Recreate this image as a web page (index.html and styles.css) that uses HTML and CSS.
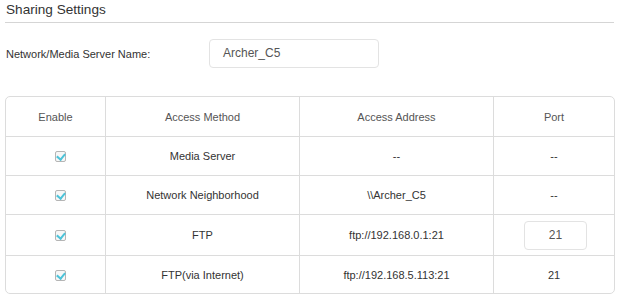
FILE: index.html
```html
<!DOCTYPE html>
<html lang="en">
<head>
    <meta charset="UTF-8">
    <title>Sharing Settings</title>
    <link rel="stylesheet" href="styles.css">
</head>
<body>
    <div class="panel">
        <h2 class="panel-title">Sharing Settings</h2>

        <div class="form-row">
            <label class="form-label">Network/Media Server Name:</label>
            <div class="text-input">Archer_C5</div>
        </div>

        <table class="share-table">
            <thead>
                <tr>
                    <th class="col-enable">Enable</th>
                    <th class="col-method">Access Method</th>
                    <th class="col-address">Access Address</th>
                    <th class="col-port">Port</th>
                </tr>
            </thead>
            <tbody>
                <tr>
                    <td><span class="check"></span></td>
                    <td>Media Server</td>
                    <td>--</td>
                    <td>--</td>
                </tr>
                <tr>
                    <td><span class="check"></span></td>
                    <td>Network Neighborhood</td>
                    <td>\\Archer_C5</td>
                    <td>--</td>
                </tr>
                <tr class="row-tall">
                    <td><span class="check"></span></td>
                    <td>FTP</td>
                    <td>ftp://192.168.0.1:21</td>
                    <td><div class="port-input">21</div></td>
                </tr>
                <tr>
                    <td><span class="check"></span></td>
                    <td>FTP(via Internet)</td>
                    <td>ftp://192.168.5.113:21</td>
                    <td>21</td>
                </tr>
            </tbody>
        </table>
    </div>
</body>
</html>
```

FILE: styles.css
```css
body {
    margin: 0;
    background: #fff;
    font-family: "Liberation Sans", Arial, sans-serif;
    color: #333;
}

.panel {
    width: 609px;
    margin-left: 5px;
}

.panel-title {
    margin: 0;
    padding: 1px 0 0 1px;
    height: 21px;
    font-size: 13.6px;
    line-height: 17px;
    font-weight: normal;
    color: #333;
    border-bottom: 1px solid #d5d5d5;
}

.form-row {
    display: flex;
    align-items: center;
    margin-top: 16px;
    height: 29px;
}

.form-label {
    width: 203px;
    padding-left: 1px;
    font-size: 11px;
    color: #333;
}

.text-input {
    box-sizing: border-box;
    width: 170px;
    height: 29px;
    padding: 0 13px;
    line-height: 27px;
    font-size: 12px;
    color: #555;
    border: 1px solid #e3e3e3;
    border-radius: 4px;
}

/* table */
.share-table {
    margin-top: 28px;
    width: 610px;
    border-collapse: separate;
    border-spacing: 0;
    border: 1px solid #dcdcdc;
    border-radius: 5px;
    font-size: 11px;
    table-layout: fixed;
}

.share-table th,
.share-table td {
    height: 38px;
    padding: 0;
    text-align: center;
    font-weight: normal;
    border-right: 1px solid #dcdcdc;
    border-bottom: 1px solid #dcdcdc;
}

.share-table th {
    color: #555;
    height: 39px;
}

.share-table th:last-child,
.share-table td:last-child {
    border-right: none;
}

.share-table tbody tr:last-child td {
    border-bottom: none;
    height: 37px;
}

.share-table .row-tall td {
    height: 40px;
}

.col-enable { width: 99px; }
.col-method { width: 193px; }
.col-address { width: 193px; }

.check {
    display: inline-block;
    position: relative;
    box-sizing: border-box;
    width: 11px;
    height: 11px;
    margin-left: 9px;
    vertical-align: middle;
    border: 1px solid #b5b5b5;
    border-radius: 2px;
    background: #f7f7f7;
}

.check::after {
    content: "";
    position: absolute;
    left: 2px;
    top: 0px;
    width: 4px;
    height: 6px;
    border: solid #4cc3d9;
    border-width: 0 2px 2px 0;
    transform: rotate(40deg);
}

.port-input {
    box-sizing: border-box;
    width: 63px;
    height: 29px;
    margin-left: 30px;
    line-height: 27px;
    font-size: 12px;
    color: #555;
    border: 1px solid #e3e3e3;
    border-radius: 4px;
}
```
